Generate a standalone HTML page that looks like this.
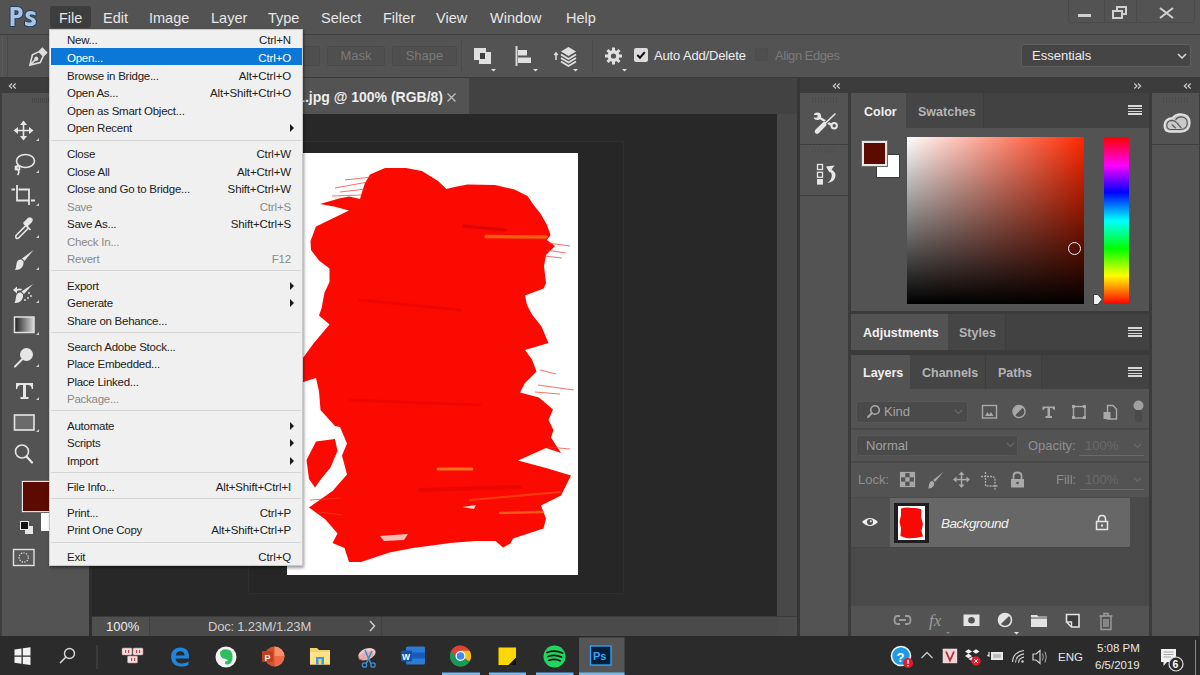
<!DOCTYPE html>
<html><head><meta charset="utf-8">
<style>
*{margin:0;padding:0;box-sizing:border-box}
html,body{width:1200px;height:675px;overflow:hidden;background:#535353;font-family:"Liberation Sans",sans-serif;position:relative}
.a{position:absolute}
.t{position:absolute;white-space:nowrap;line-height:1}
/* menubar */
#menubar{left:0;top:0;width:1200px;height:35px;background:#535353;border-bottom:1px solid #3d3d3d}
.mi{position:absolute;top:11px;font-size:14.5px;color:#e6e6e6;white-space:nowrap;line-height:1}
#opts{left:0;top:35px;width:1200px;height:43px;background:#535353;border-bottom:1px solid #3a3a3a}
.btn{position:absolute;top:46px;height:20px;border:1px solid #494949;background:#4f4f4f;border-radius:2px;color:#7a7a7a;font-size:13px;text-align:center;line-height:18px}
.hdr{background:#3c3c3c;height:15px}
.chev{color:#cfcfcf;font-size:10px;position:absolute;line-height:1}
/* menu */
#menu{left:49px;top:29px;width:254px;height:537px;background:#f0f0f0;border:1px solid #c8c8c8;box-shadow:1px 2px 3px rgba(0,0,0,.4)}
.m{position:absolute;left:17px;font-size:11.5px;color:#222;line-height:14px;white-space:nowrap;letter-spacing:-0.25px}
.k{position:absolute;right:11px;font-size:11.5px;color:#222;line-height:14px;white-space:nowrap;letter-spacing:-0.15px}
.dis{color:#8a8a8a}
.sep{position:absolute;left:1px;right:1px;height:1px;background:#d5d5d5}
.arr{position:absolute;right:8px;width:0;height:0;border-left:4px solid #1a1a1a;border-top:4px solid transparent;border-bottom:4px solid transparent}
</style></head>
<body>
<!-- menubar -->
<div id="menubar" class="a">
  <svg class="a" style="left:0;top:0" width="50" height="34" viewBox="0 0 50 34">
   <g stroke="#1d3552" stroke-width="1.6" stroke-linejoin="round" fill="#a8c3e3" paint-order="stroke">
    <path d="M10.5 7 H16.5 Q22.7 7 22.7 12.5 Q22.7 18.2 16.5 18.2 H14.5 V26 H10.5 Z M14.5 10.3 V14.9 H16 Q18.6 14.9 18.6 12.6 Q18.6 10.3 16 10.3 Z" fill-rule="evenodd"/>
    <path d="M35.5 12.2 Q33 11 30.5 11 Q25.5 11 25.5 15.3 Q25.5 18 29.3 19.2 Q31.8 20 31.8 21.2 Q31.8 22.6 29.5 22.6 Q27 22.6 25 21.2 V25 Q27 26.3 30 26.3 Q36 26.3 36 21.6 Q36 18.6 32 17.3 Q29.6 16.5 29.6 15.4 Q29.6 14.4 31.2 14.4 Q33.3 14.4 35.5 15.8 Z"/>
   </g>
  </svg>
  <div class="a" style="left:50px;top:6px;width:41px;height:22px;background:#3d3d3d;border-radius:3px"></div>
  <div class="mi" style="left:59px">File</div>
  <div class="mi" style="left:103px">Edit</div>
  <div class="mi" style="left:149px">Image</div>
  <div class="mi" style="left:211px">Layer</div>
  <div class="mi" style="left:268px">Type</div>
  <div class="mi" style="left:321px">Select</div>
  <div class="mi" style="left:383px">Filter</div>
  <div class="mi" style="left:436px">View</div>
  <div class="mi" style="left:490px">Window</div>
  <div class="mi" style="left:566px">Help</div>
  <!-- window controls -->
  <div class="a" style="left:1068px;top:-2px;width:127px;height:25px;border:1px solid #4a4a4a;border-radius:3px"></div>
  <div class="a" style="left:1104px;top:0;width:1px;height:22px;background:#4a4a4a"></div>
  <div class="a" style="left:1136px;top:0;width:1px;height:22px;background:#4a4a4a"></div>
  <div class="a" style="left:1078px;top:14px;width:13px;height:3px;background:#d0d0d0"></div>
  <div class="a" style="left:1116px;top:6px;width:11px;height:9px;border:2px solid #d0d0d0"></div>
  <div class="a" style="left:1112px;top:10px;width:11px;height:9px;border:2px solid #d0d0d0;background:#535353"></div>
  <svg class="a" style="left:1159px;top:7px" width="15" height="12"><path d="M1 1 L14 11 M14 1 L1 11" stroke="#d0d0d0" stroke-width="2"/></svg>
</div>

<!-- options bar -->
<div id="opts" class="a"></div>
  <div class="a" style="left:2px;top:36px;width:6px;height:41px;border-left:1px solid #5c5c5c;border-right:1px solid #4a4a4a"></div>
  <svg class="a" style="left:26px;top:47px;position:absolute" width="22" height="22" viewBox="0 0 22 22">
    <g transform="rotate(45 11 11)" fill="none" stroke="#dedede" stroke-width="1.6">
      <rect x="8" y="0.5" width="6" height="3.5" fill="#dedede"/>
      <path d="M8 5 L14 5 L16.5 12 L11 21 L5.5 12 Z"/>
      <circle cx="11" cy="12" r="1.3" fill="#dedede"/>
      <path d="M11 13 L11 20"/>
    </g>
  </svg>
  <div class="btn" style="left:303px;width:17px"></div>
  <div class="btn" style="left:327px;width:58px">Mask</div>
  <div class="btn" style="left:392px;width:65px">Shape</div>
  <div class="a" style="left:461px;top:40px;width:1px;height:33px;background:#4a4a4a"></div>
  <svg class="a" style="left:472px;top:46px" width="26" height="28" viewBox="0 0 26 28">
    <rect x="2" y="2" width="12" height="12" fill="#e0e0e0"/>
    <rect x="7" y="6" width="12" height="12" fill="#e0e0e0"/>
    <rect x="8" y="7" width="5" height="6" fill="#3e3e3e"/>
    <path d="M19 23 h5 l-2.5 2.5z" fill="#e0e0e0"/>
  </svg>
  <svg class="a" style="left:513px;top:45px" width="26" height="28" viewBox="0 0 26 28">
    <rect x="2.5" y="1" width="2" height="20" fill="#d8d8d8"/>
    <rect x="5" y="5" width="9" height="5.5" fill="#e0e0e0"/>
    <rect x="5" y="12.5" width="13" height="5.5" fill="#e0e0e0"/>
    <path d="M20 24 h5 l-2.5 2.5z" fill="#e0e0e0"/>
  </svg>
  <svg class="a" style="left:553px;top:45px" width="28" height="28" viewBox="0 0 28 28">
    <path d="M3 8 L3 15 M1.3 10 L3 8 L4.7 10" stroke="#e0e0e0" stroke-width="1.5" fill="none"/>
    <path d="M8 13 L15.5 17.5 L23 13 M8 16.5 L15.5 21 L23 16.5" stroke="#e0e0e0" stroke-width="1.8" fill="none"/>
    <path d="M15.5 2 L23 6.5 L15.5 11 L8 6.5 Z" fill="#e0e0e0"/>
    <path d="M8 9.5 L15.5 14 L23 9.5" stroke="#e0e0e0" stroke-width="1.8" fill="none"/>
    <path d="M20 24 h5 l-2.5 2.5z" fill="#e0e0e0"/>
  </svg>
  <div class="a" style="left:592px;top:40px;width:1px;height:33px;background:#4a4a4a"></div>
  <svg class="a" style="left:603px;top:46px" width="28" height="28" viewBox="0 0 28 28">
    <g fill="#e0e0e0">
      <circle cx="10.5" cy="10" r="6"/>
      <rect x="9" y="1.5" width="3" height="17"/>
      <rect x="2" y="8.5" width="17" height="3"/>
      <rect x="9" y="1.5" width="3" height="17" transform="rotate(45 10.5 10)"/>
      <rect x="9" y="1.5" width="3" height="17" transform="rotate(-45 10.5 10)"/>
    </g>
    <circle cx="10.5" cy="10" r="2.6" fill="#535353"/>
    <path d="M19 23 h5 l-2.5 2.5z" fill="#e0e0e0"/>
  </svg>
  <div class="a" style="left:634px;top:48px;width:13.5px;height:13.5px;background:#dcdcdc;border-radius:2px"></div>
  <svg class="a" style="left:634px;top:48px" width="14" height="14"><path d="M3.3 7 L6 9.7 L10.8 4.2" stroke="#111" stroke-width="2" fill="none"/></svg>
  <div class="t" style="left:654px;top:49px;font-size:13px;color:#ececec;letter-spacing:-0.15px">Auto Add/Delete</div>
  <div class="a" style="left:755px;top:48px;width:13px;height:13px;border:1px solid #4c4c4c;background:#4f4f4f;border-radius:2px"></div>
  <div class="t" style="left:775px;top:49px;font-size:13px;color:#7a7a7a;letter-spacing:-0.45px">Align Edges</div>
  <div class="a" style="left:1021px;top:44px;width:170px;height:23px;background:#454545;border:1px solid #5f5f5f;border-radius:3px"></div>
  <div class="t" style="left:1032px;top:49px;font-size:13px;color:#ececec">Essentials</div>
  <svg class="a" style="left:1177px;top:53px" width="10" height="7"><path d="M1 1 L5 5 L9 1" stroke="#dcdcdc" stroke-width="1.5" fill="none"/></svg>


<!-- left header strip -->
<div class="a hdr" style="left:0;top:78px;width:90px"></div>
<!-- left toolbar -->
<div class="a" style="left:0;top:93px;width:2px;height:543px;background:#3e3e3e"></div>
<div class="a" style="left:89px;top:78px;width:3px;height:558px;background:#2e2e2e"></div>

<!-- toolbar icons -->
<div class="a" style="left:32px;top:98px;width:17px;height:5px;background:repeating-linear-gradient(90deg,#474747 0 1px,#535353 1px 2px)"></div>
<svg class="a" style="left:0;top:110px" width="49" height="470" viewBox="0 110 49 470">
 <g fill="#e6e6e6">
  <path d="M36 141 h3 v-3 z M36 173 h3 v-3 z M36 206 h3 v-3 z M36 238 h3 v-3 z M36 270 h3 v-3 z M36 303 h3 v-3 z M36 335 h3 v-3 z M36 367 h3 v-3 z M36 400 h3 v-3 z M36 432 h3 v-3 z" fill="#cfcfcf"/>
 </g>
 <!-- move -->
 <g stroke="#e6e6e6" stroke-width="1.6" fill="#e6e6e6">
  <path d="M23.5 123 V138 M16 130.5 H31" fill="none"/>
  <path d="M23.5 120.5 L20 125 H27 Z M23.5 140.5 L20 136 H27 Z M13.5 130.5 L18 127 V134 Z M33.5 130.5 L29 127 V134 Z" stroke="none"/>
 </g>
 <!-- lasso -->
 <g stroke="#e6e6e6" stroke-width="1.6" fill="none">
  <ellipse cx="25.5" cy="161" rx="9" ry="6.5"/>
  <path d="M18 165 Q15 168 18 170 Q20 172 17.5 175"/>
  <rect x="15.5" y="166.5" width="4" height="3" />
 </g>
 <!-- crop -->
 <g stroke="#e6e6e6" stroke-width="1.8" fill="none">
  <path d="M17 185 V200.5 H29 M18.5 189.5 H29 V205 M11.5 189.5 H15 M31 200.5 H35"/>
 </g>
 <!-- eyedropper -->
 <g stroke="#e6e6e6" stroke-width="1.6" fill="none">
  <path d="M16 235.5 L26 225.5 L28.5 228 L18.5 238 Q15 239.5 16 235.5 Z"/>
  <path d="M24 223.5 L30.5 230 M27 226 L31 222 Q33 219 31 218.5 Q29 217 27 220 L23.5 223.5" fill="#e6e6e6"/>
 </g>
 <!-- brush -->
 <g fill="#e6e6e6">
  <path d="M33.5 250 L24.5 261 L22 258.5 Z"/>
  <path d="M21.5 259.5 Q17 259 16.5 264 Q16 268 15 270 Q20.5 270 22.5 266.5 Q24 263.5 23.5 261.5 Z"/>
 </g>
 <!-- healing -->
 <g fill="#e6e6e6">
  <path d="M33 284 L24 294 L21.5 291.5 Z"/>
  <path d="M21 292.5 Q16.5 292 16 297 Q15.5 301 14.5 303 Q20 303 22 299.5 Q23.5 296.5 23 294.5 Z"/>
  <path d="M13 290 L17 286.5 L17 289 Q20 288 22 289 L21 290.5 Q19 290 17 291 L17 293.5 Z"/>
  <circle cx="29" cy="293" r="0.9"/><circle cx="31" cy="296" r="0.9"/><circle cx="28" cy="298" r="0.9"/><circle cx="25" cy="300" r="0.9"/>
 </g>
 <!-- gradient -->
 <defs><linearGradient id="gr" x1="0" x2="1"><stop offset="0" stop-color="#1e1e1e"/><stop offset="1" stop-color="#d8d8d8"/></linearGradient></defs>
 <rect x="14.5" y="317" width="19.5" height="15.5" fill="url(#gr)" stroke="#e0e0e0" stroke-width="1.5"/>
 <!-- dodge -->
 <circle cx="26.5" cy="354.5" r="6.5" fill="#e6e6e6"/>
 <path d="M22 359.5 L15 366.5" stroke="#e6e6e6" stroke-width="2" stroke-linecap="round"/>
 <!-- type -->
 <path d="M16 383 H33 V389 H31.8 Q31.5 385 28 385 H26 V397 H28.5 V399 H20.5 V397 H23 V385 H21 Q17.5 385 17.2 389 H16 Z" fill="#e6e6e6"/>
 <!-- rect -->
 <rect x="14.5" y="415" width="19.5" height="15" fill="#6b6b6b" stroke="#e6e6e6" stroke-width="1.6"/>
 <!-- zoom -->
 <circle cx="22" cy="451.5" r="6.5" fill="none" stroke="#e6e6e6" stroke-width="1.6"/>
 <path d="M26.5 456.5 L32 462.5" stroke="#e6e6e6" stroke-width="2.2" stroke-linecap="round"/>
 <!-- default colors -->
 <rect x="25" y="526" width="8" height="8" fill="#e6e6e6"/>
 <rect x="20.5" y="521.5" width="8" height="8" fill="#111" stroke="#e6e6e6" stroke-width="1"/>
 <!-- quick mask -->
 <rect x="13.5" y="549.5" width="20.5" height="16" fill="#5a5a5a" stroke="#e0e0e0" stroke-width="1.4"/>
 <circle cx="23.7" cy="557.5" r="4.6" fill="none" stroke="#e0e0e0" stroke-width="1.2" stroke-dasharray="1.3 1.3"/>
</svg>
<!-- fg/bg -->
<div class="a" style="left:41px;top:497px;width:30px;height:34px;background:#fff"></div>
<div class="a" style="left:22px;top:481px;width:30px;height:31px;background:#5c0b02;border:1px solid #e8e8e8;outline:1px solid #6a6a6a"></div>
<svg class="a" style="left:8px;top:82px" width="9" height="8"><path d="M4 1.5 L1.3 4 L4 6.5 M7.7 1.5 L5 4 L7.7 6.5" stroke="#d0d0d0" stroke-width="1.1" fill="none"/></svg>

<!-- tab bar -->
<div class="a" style="left:92px;top:78px;width:708px;height:36px;background:#424242"></div>
<div class="a" style="left:92px;top:78px;width:377px;height:36px;background:#535353"></div>
<div class="t" style="left:180px;top:90px;font-size:14px;font-weight:bold;color:#ededed;width:263px;text-align:right">Untitled-1.jpg @ 100% (RGB/8)</div>
<svg class="a" style="left:446px;top:92px" width="11" height="11"><path d="M1.5 1.5 L9.5 9.5 M9.5 1.5 L1.5 9.5" stroke="#bdbdbd" stroke-width="1.3"/></svg>
<!-- canvas -->
<!-- canvas details -->
<div class="a" style="left:92px;top:114px;width:685px;height:502px;background:#282828"></div>
<div class="a" style="left:248px;top:141px;width:376px;height:453px;border:1px solid #2f2f2f;background:#262626"></div>
<div class="a" style="left:287px;top:153px;width:291px;height:422px;background:#fff;overflow:hidden">
<svg width="291" height="422" viewBox="287 153 291 422" style="position:absolute;left:0;top:0">
 <path fill="#fb0a02" d="M320 204 L339 198.5 L349 196.5 L360 199 L362 192 L365 183 L370 174.5 L385 168 L406 168 L422 171 L438 181 L446.5 189 L454.5 187 L467.5 184.5 L495 185 L514.5 189.5 L527.5 196 L534 205.5 L540.5 213.5 L547 225 L550.5 235 L547 240 L555 246 L546 255 L544 266 L546 283.5 L543.5 288.5 L525 295.5 L527 305 L532 314.5 L541.5 326.5 L548.5 343 L525 350 L532 359.5 L536.5 371.5 L525 383 L520 392.5 L539 397.5 L553 409.5 L548.5 420 L553.5 430 L551 437.5 L561 453 L546 448 L518 460.5 L546 468 L571 475.5 L566 485.5 L561 495.5 L541 505.5 L546 518.5 L543.5 528.5 L513 538.5 L510.5 543.5 L503 547.5 L495.5 541 L475.5 541 L450 543 L432 545.5 L413 548 L389.5 552.5 L361 562 L349 562 L344.5 548 L332.5 543 L337.5 533.5 L325.5 519.5 L309 507.5 L332.5 491 L347 474.5 L342 455.5 L347 443.5 L340 427 L335 426 L320.5 410 L319 391.5 L316 378 L300 383 L300 362 L313.5 343.5 L329.5 324.5 L319 315.5 L321.5 308.5 L324.5 292.5 L329.5 282 L329.5 268.5 L319 260.5 L311 250 L310.5 241 L316 226.5 L332.5 218.5 L349 210.5 L334 206.5 Z"/>
 <path fill="#fb0a02" d="M306.5 460 L316 441.5 L335 439 L337.5 451 L330.5 467.5 L321 479 L315 487.5 L309 479 Z"/>
 <g stroke="#f53a2a" stroke-width="1.2" opacity="0.7" fill="none">
  <path d="M335 188 L368 182 M340 192 L366 189 M332 196 L362 195 M345 180 L372 177"/>
  <path d="M548 243 L570 246 M546 250 L566 253 M544 256 L562 258 M548 447 L570 449 M310 500 L340 498 M318 512 L342 515 M540 370 L556 374 M538 385 L574 390 M535 392 L560 394"/>
 </g>
 <g fill="none" stroke-linecap="round">
  <path d="M486 236.5 L546 237" stroke="#f07a10" stroke-width="3.5" opacity="0.75"/>
  <path d="M464 226 L505 230" stroke="#c00000" stroke-width="3" opacity="0.5"/>
  <path d="M438 469 L472 469" stroke="#f2a020" stroke-width="3" opacity="0.7"/>
  <path d="M500 513 L543 512" stroke="#f09020" stroke-width="2.5" opacity="0.6"/>
  <path d="M420 490 L520 487" stroke="#d00000" stroke-width="4" opacity="0.35"/>
  <path d="M360 300 L460 310 M350 400 L480 405" stroke="#d80000" stroke-width="3" opacity="0.3"/>
  <path d="M470 500 L560 492" stroke="#ff6a10" stroke-width="2" opacity="0.5"/>
 </g>
 <path d="M380 536 L408 534 L404 540 L384 541 Z" fill="#f6d0c8" opacity="0.9"/>
 <path d="M462 507 L476 505 L474 509 Z" fill="#f8d8c8"/>
</svg>
</div>

<div class="a" style="left:777px;top:114px;width:20px;height:502px;background:#484848"></div>
<div class="a" style="left:797px;top:78px;width:3px;height:558px;background:#353535"></div>

<!-- right panels -->
<div class="a hdr" style="left:800px;top:78px;width:400px"></div>
<div class="a" style="left:800px;top:93px;width:400px;height:543px;background:#535353"></div>
<div class="a" style="left:848px;top:93px;width:3px;height:543px;background:#3b3b3b"></div>
<div class="a" style="left:1149px;top:93px;width:3px;height:543px;background:#3b3b3b"></div>
<div class="a" style="left:1199px;top:93px;width:1px;height:543px;background:#3b3b3b"></div>
<svg class="a" style="left:832px;top:82px" width="9" height="8"><path d="M4 1.5 L1.3 4 L4 6.5 M7.7 1.5 L5 4 L7.7 6.5" stroke="#d0d0d0" stroke-width="1.1" fill="none"/></svg>
<svg class="a" style="left:1133px;top:82px" width="9" height="8"><path d="M1.3 1.5 L4 4 L1.3 6.5 M5 1.5 L7.7 4 L5 6.5" stroke="#d0d0d0" stroke-width="1.1" fill="none"/></svg>
<svg class="a" style="left:1183px;top:82px" width="9" height="8"><path d="M4 1.5 L1.3 4 L4 6.5 M7.7 1.5 L5 4 L7.7 6.5" stroke="#d0d0d0" stroke-width="1.1" fill="none"/></svg>
<!-- icon column -->
<div class="a" style="left:800px;top:144px;width:48px;height:1px;background:#3e3e3e"></div>
<div class="a" style="left:800px;top:195px;width:48px;height:1px;background:#3e3e3e"></div>
<div class="a" style="left:812px;top:97px;width:25px;height:6px;background:repeating-linear-gradient(90deg,#4b4b4b 0 1px,#535353 1px 3px)"></div>
<div class="a" style="left:812px;top:149px;width:25px;height:4px;background:repeating-linear-gradient(90deg,#4d4d4d 0 1px,#535353 1px 3px)"></div>
<div class="a" style="left:1163px;top:97px;width:25px;height:6px;background:repeating-linear-gradient(90deg,#4b4b4b 0 1px,#535353 1px 3px)"></div>
<div class="a" style="left:1152px;top:144px;width:47px;height:1px;background:#3e3e3e"></div>
<svg class="a" style="left:805px;top:105px" width="40" height="35" viewBox="805 105 40 35">
 <path d="M820 118 L831.5 125" stroke="#e6e6e6" stroke-width="2.2" stroke-linecap="round"/>
 <circle cx="817.3" cy="116.3" r="3.8" fill="#e6e6e6"/>
 <path d="M812.5 115 H817.5 V117.6 H812.5 Z" fill="#535353"/>
 <circle cx="834.2" cy="125.8" r="2.7" fill="#535353" stroke="#e6e6e6" stroke-width="2"/>
 <path d="M835 114 L825 123.5" stroke="#535353" stroke-width="3.6" stroke-linecap="round"/>
 <path d="M835 114 L825 123.5" stroke="#e6e6e6" stroke-width="1.7" stroke-linecap="round"/>
 <path d="M824.2 124.3 L817 131.5" stroke="#e6e6e6" stroke-width="4.6" stroke-linecap="round"/>
</svg>
<svg class="a" style="left:808px;top:155px" width="40" height="40" viewBox="808 155 40 40">
 <rect x="817.5" y="164.5" width="5" height="5" fill="none" stroke="#e6e6e6" stroke-width="1.3"/>
 <rect x="817.5" y="172.3" width="5" height="5" fill="none" stroke="#e6e6e6" stroke-width="1.3"/>
 <rect x="817" y="179" width="6" height="5.6" fill="#e6e6e6"/>
 <path d="M826 166.5 L834.5 165.5 L829.5 172.5 Z" fill="#e6e6e6"/>
 <path d="M830 168.5 Q836.8 172 835.2 177.5 Q833.5 182 827.5 183 Q831.8 179.5 831.8 175.5 Q831.8 172.5 828.5 170.8 Z" fill="#e6e6e6"/>
</svg>
<svg class="a" style="left:1158px;top:105px" width="38" height="35" viewBox="1158 105 38 35">
 <path d="M1169.5 131.8 Q1164.3 131.5 1164.3 125.5 Q1164.5 118.5 1172.5 117.8 Q1175.5 114.2 1180.5 114.2 Q1189.8 114.5 1189.8 123 Q1189.5 131.8 1180.5 131.8 Z" fill="#c9c9c9" stroke="#e2e2e2" stroke-width="1.7"/>
 <path d="M1170 129.5 Q1166.8 129 1166.8 125.3 Q1167 120.5 1172 120.3 Q1175 120.3 1177.5 123.5 L1179.5 125.8 Q1181.5 128.3 1181.5 128.3" fill="none" stroke="#5a5a5a" stroke-width="1.2"/>
 <path d="M1175.5 119.8 Q1177.5 116.8 1181 116.8 Q1187.3 117.2 1187.3 123 Q1187.2 129.3 1180.5 129.5 H1170" fill="none" stroke="#5a5a5a" stroke-width="1.2"/>
 <path d="M1171.8 124.5 L1175.8 128.3" stroke="#5a5a5a" stroke-width="1.3"/>
</svg>
<!-- color panel -->
<div class="a" style="left:851px;top:93px;width:298px;height:35px;background:#424242"></div>
<div class="a" style="left:851px;top:93px;width:55px;height:35px;background:#535353"></div>
<div class="a" style="left:906px;top:93px;width:78px;height:35px;background:#454545;border-right:1px solid #3c3c3c"></div>
<div class="t" style="left:864px;top:106px;font-size:12.5px;font-weight:bold;color:#f0f0f0">Color</div>
<div class="t" style="left:918px;top:106px;font-size:12.5px;font-weight:bold;color:#b4b4b4">Swatches</div>
<div class="a" style="left:1128px;top:105px;width:14px;height:10px;background:repeating-linear-gradient(180deg,#d8d8d8 0 1.5px,transparent 1.5px 2.75px)"></div>
<div class="a" style="left:876px;top:154px;width:24px;height:24px;background:#fff;border:1px solid #3a3a3a"></div>
<div class="a" style="left:861px;top:140px;width:27px;height:27px;background:#e8e8e8;border:1px solid #6a6a6a;padding:2px"><div style="width:100%;height:100%;background:#5c0b02"></div></div>
<div class="a" style="left:907px;top:137px;width:177px;height:167px;background:linear-gradient(to bottom,rgba(0,0,0,0),#000),linear-gradient(to right,#fff,#ff2800)"></div>
<div class="a" style="left:1068px;top:242px;width:13px;height:13px;border:1.5px solid #f0f0f0;border-radius:50%"></div>
<div class="a" style="left:1104px;top:137px;width:25px;height:167px;background:linear-gradient(to bottom,#ff0000 0%,#ff00ff 17%,#0000ff 33%,#00ffff 50%,#00ff00 67%,#ffff00 83%,#ff0000 100%)"></div>
<svg class="a" style="left:1092px;top:293px" width="11" height="13"><path d="M1.5 1.5 H6 L10 6.5 L6 11.5 H1.5 Z" fill="#f0f0f0" stroke="#3a3a3a" stroke-width="1"/></svg>
<div class="a" style="left:851px;top:311px;width:298px;height:3px;background:#3b3b3b"></div>
<!-- adjustments -->
<div class="a" style="left:851px;top:314px;width:298px;height:36px;background:#424242"></div>
<div class="a" style="left:851px;top:314px;width:97px;height:36px;background:#535353"></div>
<div class="a" style="left:948px;top:314px;width:58px;height:36px;background:#454545;border-right:1px solid #3c3c3c"></div>
<div class="t" style="left:863px;top:327px;font-size:12.5px;font-weight:bold;color:#f0f0f0">Adjustments</div>
<div class="t" style="left:959px;top:327px;font-size:12.5px;font-weight:bold;color:#b4b4b4">Styles</div>
<div class="a" style="left:1128px;top:327px;width:14px;height:10px;background:repeating-linear-gradient(180deg,#d8d8d8 0 1.5px,transparent 1.5px 2.75px)"></div>
<div class="a" style="left:851px;top:350px;width:298px;height:5px;background:#3b3b3b"></div>
<!-- layers -->
<div class="a" style="left:851px;top:355px;width:298px;height:34px;background:#424242"></div>
<div class="a" style="left:851px;top:355px;width:59px;height:34px;background:#535353"></div>
<div class="a" style="left:910px;top:355px;width:76px;height:34px;background:#454545;border-right:1px solid #3c3c3c"></div>
<div class="a" style="left:986px;top:355px;width:56px;height:34px;background:#454545;border-right:1px solid #3c3c3c"></div>
<div class="t" style="left:863px;top:367px;font-size:12.5px;font-weight:bold;color:#f0f0f0">Layers</div>
<div class="t" style="left:922px;top:367px;font-size:12.5px;font-weight:bold;color:#b4b4b4">Channels</div>
<div class="t" style="left:998px;top:367px;font-size:12.5px;font-weight:bold;color:#b4b4b4">Paths</div>
<div class="a" style="left:1128px;top:367px;width:14px;height:10px;background:repeating-linear-gradient(180deg,#d8d8d8 0 1.5px,transparent 1.5px 2.75px)"></div>



<!-- layers body -->
<div class="a" style="left:851px;top:427.5px;width:298px;height:2px;background:#484848"></div>
<div class="a" style="left:851px;top:461px;width:298px;height:2px;background:#484848"></div>
<div class="a" style="left:856px;top:400.5px;width:112px;height:22px;background:#4a4a4a;border:1px solid #575757;border-radius:3px"></div>
<svg class="a" style="left:865px;top:403px" width="17" height="17" viewBox="0 0 17 17"><circle cx="10" cy="7" r="4.3" fill="none" stroke="#a8a8a8" stroke-width="1.6"/><path d="M7 10 L3 14" stroke="#a8a8a8" stroke-width="2" stroke-linecap="round"/></svg>
<div class="t" style="left:884px;top:405px;font-size:13px;color:#a5a5a5">Kind</div>
<svg class="a" style="left:954px;top:409px" width="9" height="6"><path d="M1 1 L4.5 4.5 L8 1" stroke="#6a6a6a" stroke-width="1.2" fill="none"/></svg>
<svg class="a" style="left:978px;top:398px" width="175" height="28" viewBox="978 398 175 28">
 <g stroke="#a9a9a9" fill="none" stroke-width="1.4">
  <rect x="982.5" y="405.5" width="14" height="12.5"/>
  <circle cx="1019" cy="411.5" r="6"/>
  <rect x="1073.5" y="406.5" width="11.5" height="11.5"/>
 </g>
 <path d="M985 416 L987.5 412 L990 416 Z M988.5 416 L991 412 L993.5 416 Z" fill="#a9a9a9"/>
 <path d="M1014.8 415.7 A6 6 0 0 1 1023.2 407.3 Z" fill="#a9a9a9"/>
 <path d="M1042.5 406.5 H1055 V410 H1054 Q1053.5 408 1051 408 H1050 V416 H1052 V418 H1045.5 V416 H1047.5 V408 H1046.5 Q1044 408 1043.5 410 H1042.5 Z" fill="#a9a9a9"/>
 <g fill="#a9a9a9"><rect x="1072" y="405" width="3" height="3"/><rect x="1083" y="405" width="3" height="3"/><rect x="1072" y="416" width="3" height="3"/><rect x="1083" y="416" width="3" height="3"/></g>
 <path d="M1107.5 405.5 H1113 L1116.5 409 V419 H1107.5 Z" fill="none" stroke="#a9a9a9" stroke-width="1.4"/>
 <rect x="1103.5" y="412" width="7" height="7" fill="#a9a9a9"/>
 <circle cx="1138.5" cy="405.5" r="5" fill="#a0a0a0"/>
 <rect x="1135" y="410" width="7" height="12" rx="3" fill="#4a4a4a"/>
</svg>
<div class="a" style="left:856px;top:434.5px;width:162px;height:21px;background:#4a4a4a;border:1px solid #575757;border-radius:3px"></div>
<div class="t" style="left:866px;top:439px;font-size:13px;color:#a0a0a0">Normal</div>
<svg class="a" style="left:1006px;top:442px" width="9" height="6"><path d="M1 1 L4.5 4.5 L8 1" stroke="#6a6a6a" stroke-width="1.2" fill="none"/></svg>
<div class="t" style="left:1028px;top:439px;font-size:13px;color:#8e8e8e">Opacity:</div>
<div class="t" style="left:1085px;top:439px;font-size:13px;color:#6a6a6a">100%</div>
<div class="a" style="left:1079px;top:455px;width:65px;height:1px;background:#6a6a6a"></div>
<svg class="a" style="left:1133px;top:443px" width="9" height="6"><path d="M1 1 L4.5 4.5 L8 1" stroke="#6a6a6a" stroke-width="1.2" fill="none"/></svg>
<div class="t" style="left:858px;top:473px;font-size:13px;color:#8e8e8e">Lock:</div>
<svg class="a" style="left:895px;top:468px" width="135" height="24" viewBox="895 468 135 24">
 <g fill="#a9a9a9">
  <rect x="900.5" y="472.5" width="14" height="14" fill="none" stroke="#a9a9a9" stroke-width="1.2"/>
  <rect x="901" y="473" width="4.3" height="4.3"/><rect x="909.6" y="473" width="4.3" height="4.3"/><rect x="905.3" y="477.3" width="4.3" height="4.3"/><rect x="901" y="481.6" width="4.3" height="4.3"/><rect x="909.6" y="481.6" width="4.3" height="4.3"/>
  <path d="M943.5 472 L935 482 L933 480 Z"/>
  <path d="M932.5 481 Q929.5 481 929 485 Q928.8 487 928 488.5 Q932 488.5 933.5 486 Q934.5 484 934 482.5 Z"/>
  <path d="M961.5 471.5 L958.5 475 H964.5 Z M961.5 488 L958.5 484.5 H964.5 Z M953 479.5 L956.5 476.5 V482.5 Z M970 479.5 L966.5 476.5 V482.5 Z"/>
  <rect x="960.8" y="474" width="1.5" height="11"/><rect x="956" y="478.8" width="11" height="1.5"/>
  <rect x="1011" y="479" width="13" height="8.5"/>
 </g>
 <path d="M985.5 472 V486 H998 M981 476.5 H993 L995 478.5 V490" fill="none" stroke="#a9a9a9" stroke-width="1.3" stroke-dasharray="2 1"/>
 <path d="M1013.5 479 V476 Q1013.5 472.5 1017.5 472.5 Q1021.5 472.5 1021.5 476 V479" fill="none" stroke="#a9a9a9" stroke-width="1.8"/>
 <circle cx="1017.5" cy="483" r="1.3" fill="#535353"/>
</svg>
<div class="t" style="left:1056px;top:473px;font-size:13px;color:#8e8e8e">Fill:</div>
<div class="t" style="left:1085px;top:473px;font-size:13px;color:#6a6a6a">100%</div>
<div class="a" style="left:1080px;top:489px;width:64px;height:1px;background:#6a6a6a"></div>
<svg class="a" style="left:1133px;top:477px" width="9" height="6"><path d="M1 1 L4.5 4.5 L8 1" stroke="#6a6a6a" stroke-width="1.2" fill="none"/></svg>
<!-- layer list -->
<div class="a" style="left:851px;top:497px;width:298px;height:109px;background:#4a4a4a"></div>
<div class="a" style="left:851px;top:498px;width:39px;height:49px;background:#505050"></div>
<div class="a" style="left:890px;top:498px;width:240px;height:49px;background:#676767"></div>
<div class="a" style="left:851px;top:547px;width:279px;height:1px;background:#454545"></div>
<svg class="a" style="left:860px;top:514px" width="20" height="16" viewBox="0 0 20 16"><path d="M2 8 Q10 0 18 8 Q10 16 2 8 Z" fill="#efefef"/><circle cx="10" cy="8" r="3" fill="#505050"/><circle cx="10.8" cy="7.2" r="1" fill="#efefef"/></svg>
<div class="a" style="left:893.5px;top:502.5px;width:35px;height:40px;background:#1e1e1e"></div>
<div class="a" style="left:898px;top:505.5px;width:27px;height:34px;background:#fff;overflow:hidden">
 <svg width="27" height="34" viewBox="0 0 27 34"><path d="M3 2.5 Q8 1 14 2 Q21 1.5 23.5 3.5 L23 11 L25 18 L23.5 25 L25 30.5 Q16 33 8 32 L2.5 30 L3 22 L1.5 16 L3 9 Z" fill="#f70a05"/></svg>
</div>
<div class="t" style="left:941px;top:517px;font-size:13.5px;font-style:italic;color:#f0f0f0;letter-spacing:-0.5px">Background</div>
<svg class="a" style="left:1094px;top:514px" width="16" height="17" viewBox="0 0 16 17">
 <path d="M4.5 7.5 V5 Q4.5 1.5 8 1.5 Q11.5 1.5 11.5 5 V7.5" fill="none" stroke="#e6e6e6" stroke-width="1.5"/>
 <rect x="2.5" y="7.5" width="11" height="8" fill="none" stroke="#e6e6e6" stroke-width="1.5"/>
 <rect x="7" y="10.5" width="2" height="2" fill="#e6e6e6"/>
</svg>
<!-- layers bottom bar -->
<div class="a" style="left:851px;top:606px;width:298px;height:30px;background:#535353"></div>
<svg class="a" style="left:890px;top:608px" width="230" height="28" viewBox="890 608 230 28">
 <g fill="none" stroke="#9c9c9c" stroke-width="1.8">
  <path d="M900 616 H897.5 Q894.5 616 894.5 620 Q894.5 624 897.5 624 H900 M905 616 H907.5 Q910.5 616 910.5 620 Q910.5 624 907.5 624 H905 M899 620 H906"/>
 </g>
 <text x="929" y="626" font-family="Liberation Serif" font-style="italic" font-size="17" fill="#9c9c9c">fx</text>
 <path d="M946 632 h4 l-2 2z" fill="#8a8a8a"/>
 <rect x="963.5" y="614.5" width="16" height="11.5" fill="#e3e3e3"/>
 <circle cx="971.5" cy="620.2" r="3.3" fill="#535353"/>
 <circle cx="1005" cy="620" r="6.5" fill="none" stroke="#e3e3e3" stroke-width="1.6"/>
 <path d="M1000.4 624.6 A6.5 6.5 0 0 1 1009.6 615.4 Z" fill="#e3e3e3"/>
 <path d="M1014 632 h5 l-2.5 2.5z" fill="#e3e3e3"/>
 <path d="M1031 615 H1037 L1038.5 616.5 H1047 V627 H1031 Z" fill="#e3e3e3"/>
 <path d="M1031 618 H1047" stroke="#535353" stroke-width="1"/>
 <path d="M1066.5 614.5 H1079 V627 H1071.5 L1066.5 622 Z" fill="#3c3c3c" stroke="#e3e3e3" stroke-width="1.6"/>
 <path d="M1066.5 622 H1071.5 V627" fill="none" stroke="#e3e3e3" stroke-width="1.4"/>
 <g fill="none" stroke="#9c9c9c" stroke-width="1.4">
  <path d="M1099.5 616 H1112.5 M1104 616 V613.5 H1108 V616 M1101 616 V629.5 H1111 V616 M1104 619 V627 M1106 619 V627 M1108 619 V627"/>
 </g>
</svg>

<!-- status bar -->
<div class="a" style="left:92px;top:616px;width:705px;height:20px;background:#4a4a4a;border-top:1px solid #3a3a3a"></div>
<div class="a" style="left:92px;top:617px;width:58px;height:19px;background:#4f4f4f;border-right:1px solid #404040"></div>
<div class="a" style="left:381px;top:617px;width:1px;height:19px;background:#404040"></div>
<div class="a" style="left:777px;top:617px;width:20px;height:19px;background:#4c4c4c"></div>
<div class="t" style="left:106px;top:620px;font-size:13px;color:#ececec">100%</div>
<div class="t" style="left:208px;top:620px;font-size:13px;color:#cdcdcd;letter-spacing:-0.2px">Doc: 1.23M/1.23M</div>
<svg class="a" style="left:368px;top:619px" width="9" height="14"><path d="M2 2 L6.5 7 L2 12" stroke="#d0d0d0" stroke-width="1.4" fill="none"/></svg>
<!-- taskbar -->
<div class="a" style="left:0;top:636px;width:1200px;height:39px;background:#2b2b2b"></div>
<svg class="a" style="left:0;top:636px" width="1200" height="39" viewBox="0 636 1200 39">
 <!-- windows -->
 <g fill="#f2f2f2">
  <path d="M14.5 649.5 L21.5 648.5 V655.5 H14.5 Z M22.8 648.3 L30.5 647.2 V655.5 H22.8 Z M14.5 656.8 H21.5 V663.8 L14.5 662.8 Z M22.8 656.8 H30.5 V665 L22.8 664 Z"/>
 </g>
 <!-- search -->
 <circle cx="69.5" cy="653.5" r="5" fill="none" stroke="#d8d8d8" stroke-width="1.4"/>
 <path d="M66 657 L60 663" stroke="#d8d8d8" stroke-width="1.6"/>
 <path d="M97 645 V669" stroke="#4a4a4a" stroke-width="1"/>
 <!-- keyboard icon -->
 <g fill="#f4dede" stroke="#b08a8a" stroke-width="0.6">
  <rect x="122" y="648" width="10" height="7" rx="1"/><rect x="133" y="648" width="10" height="7" rx="1"/><rect x="127.5" y="656" width="10" height="7" rx="1"/>
 </g>
 <g fill="#c04a4a"><rect x="125" y="650" width="1.2" height="3"/><rect x="128" y="650" width="1.2" height="3"/><rect x="136" y="650" width="1.2" height="3"/><rect x="139" y="650" width="1.2" height="3"/><rect x="131" y="658" width="1.2" height="3"/><rect x="134" y="658" width="1.2" height="3"/></g>
 <!-- edge -->
 <path d="M189 658.5 H175.5 Q176 663 181 663.5 Q185 663.8 188.5 661.5 V665 Q184.5 667 180 666.5 Q171.5 665.5 171 657 Q171 648 180 647.5 Q189.5 647.5 189 658.5 Z M175.7 655.5 H184.7 Q184.3 651.2 180.2 651.2 Q176.2 651.2 175.7 655.5 Z" fill="#1d86e0" fill-rule="evenodd"/>
 <!-- evernote -->
 <circle cx="226" cy="657" r="10.5" fill="#f4f4f4"/>
 <path d="M220 652 L223 649.5 Q228 648.5 231 651 Q233.5 656 232 661 Q230 665 226.5 664.5 Q224.5 664 225 661.5 L228 661 Q227 658.5 223.5 658.5 Q220 657.5 220 652 Z" fill="#2dbe60"/>
 <!-- powerpoint -->
 <circle cx="274.5" cy="656.5" r="10" fill="#d35230"/>
 <path d="M274.5 646.5 A10 10 0 0 1 284.5 656.5 H274.5 Z" fill="#ff8f6b"/>
 <path d="M274.5 656.5 H284.5 A10 10 0 0 1 274.5 666.5 Z" fill="#ed6c47"/>
 <rect x="262" y="651" width="11" height="11" rx="1" fill="#c43e1c"/>
 <text x="264.5" y="660.5" font-family="Liberation Sans" font-weight="bold" font-size="9" fill="#fff">P</text>
 <!-- explorer -->
 <path d="M310 648 H317 L319 650 H330 V664.5 H310 Z" fill="#f5d36c"/>
 <path d="M310 652 H330 V664.5 H310 Z" fill="#ffe28a"/>
 <rect x="316" y="657" width="8" height="7.5" fill="#3f9bd8"/>
 <rect x="318.5" y="659" width="3" height="5.5" fill="#f5d36c"/>
 <!-- snipping -->
 <ellipse cx="367" cy="654" rx="9" ry="5.5" fill="#f2c8c8" transform="rotate(-20 367 654)"/>
 <ellipse cx="366" cy="656" rx="8" ry="4" fill="#d99" transform="rotate(-20 366 656)" opacity="0.6"/>
 <path d="M365 650 L371 664 M372 651 L366 664" stroke="#3f8fd0" stroke-width="1.6"/>
 <circle cx="364.5" cy="665" r="2.2" fill="none" stroke="#3f8fd0" stroke-width="1.3"/>
 <circle cx="373" cy="665" r="2.2" fill="none" stroke="#3f8fd0" stroke-width="1.3"/>
 <!-- word -->
 <rect x="406" y="646.5" width="19" height="18" rx="1.5" fill="#2b7cd3"/>
 <rect x="406" y="652.5" width="19" height="6" fill="#185abd"/>
 <rect x="401" y="650.5" width="11" height="11" rx="1" fill="#1a4fa8"/>
 <text x="402" y="659.5" font-family="Liberation Sans" font-weight="bold" font-size="8.5" fill="#fff">W</text>
 <!-- chrome -->
 <circle cx="460.5" cy="656" r="10.5" fill="#db4437"/>
 <path d="M460.5 656 L451.4 661.25 A10.5 10.5 0 0 0 460.5 666.5 Z M460.5 656 L460.5 666.5 A10.5 10.5 0 0 0 469.6 661.25 Z" fill="#0f9d58"/>
 <path d="M460.5 656 L469.6 661.25 A10.5 10.5 0 0 0 469.6 650.75 L460.5 650.75 Z" fill="#f4c20d"/>
 <path d="M451.4 661.25 A10.5 10.5 0 0 1 451.4 650.75 L460.5 656 Z" fill="#0f9d58"/>
 <path d="M460.5 645.5 A10.5 10.5 0 0 0 451.4 650.75 L456 658.5 Z" fill="#db4437"/>
 <circle cx="460.5" cy="656" r="5" fill="#fff"/>
 <circle cx="460.5" cy="656" r="3.8" fill="#4285f4"/>
 <!-- sticky -->
 <rect x="498.5" y="647.5" width="17.5" height="17.5" fill="#fcd703"/>
 <path d="M516 657.5 V665 H508.5 Z" fill="#111"/>
 <!-- spotify -->
 <circle cx="554.5" cy="656.5" r="11" fill="#1ed760"/>
 <path d="M547 652.5 Q555 649.5 562.5 653 M548 656.5 Q555 654 561.5 657 M549 660.3 Q554.5 658.3 560 660.8" stroke="#191414" stroke-width="1.8" fill="none" stroke-linecap="round"/>
 <!-- ps active -->
 <rect x="579" y="637.5" width="45.5" height="37.5" fill="#555"/>
 <rect x="590.5" y="646" width="20.5" height="19" fill="#001e36" stroke="#31a8ff" stroke-width="1.3"/>
 <text x="593" y="660" font-family="Liberation Sans" font-weight="bold" font-size="11" fill="#31a8ff">Ps</text>
 <!-- underlines -->
 <g fill="#76b9ed">
  <rect x="442" y="672.5" width="38" height="2.5"/><rect x="489" y="672.5" width="37" height="2.5"/><rect x="536" y="672.5" width="37.5" height="2.5"/><rect x="579" y="672.5" width="45.5" height="2.5"/>
 </g>
 <!-- tray -->
 <circle cx="901" cy="656" r="9.5" fill="#1e9be2" stroke="#f2f2f2" stroke-width="1.6"/>
 <text x="896.5" y="661.5" font-family="Liberation Sans" font-weight="bold" font-size="13" fill="#fff">?</text>
 <circle cx="908" cy="663" r="5" fill="#e01e2b"/>
 <rect x="907.3" y="659.8" width="1.4" height="4" fill="#fff"/><rect x="907.3" y="665" width="1.4" height="1.3" fill="#fff"/>
 <path d="M921.5 658 L927 652.5 L932.5 658" stroke="#c8c8c8" stroke-width="1.3" fill="none"/>
 <rect x="942.7" y="648.7" width="14.5" height="14.5" fill="#f2d6d6"/>
 <path d="M946 651.5 L950 660.5 L954 651.5" stroke="#a8303c" stroke-width="1.8" fill="none"/>
 <g fill="#f2f2f2">
  <path d="M965 651.5 L968.5 649.3 L972 651.5 L968.5 653.7 Z M972.5 651.5 L976 649.3 L979.5 651.5 L976 653.7 Z M965 656 L968.5 653.8 L972 656 L968.5 658.2 Z M968.5 659 L972 657 L975.5 659 L972 661 Z"/>
 </g>
 <circle cx="976" cy="661" r="4.7" fill="#e01e2b"/>
 <path d="M974.2 659.2 L977.8 662.8 M977.8 659.2 L974.2 662.8" stroke="#fff" stroke-width="1"/>
 <rect x="991.5" y="652.5" width="11" height="7" fill="#e8e8e8" stroke="#e8e8e8" stroke-width="1"/>
 <rect x="993" y="654" width="8" height="4" fill="#bdbdbd"/>
 <path d="M987.5 656 H990 M989 652 V654.5 L987.5 656" stroke="#e8e8e8" stroke-width="1.2" fill="none"/>
 <g fill="none" stroke="#d0d0d0" stroke-width="1.2">
  <path d="M1012.5 662 Q1013 652 1024 650.5 M1015.5 662.5 Q1016 655 1024 653.8 M1018.5 662.7 Q1019 658 1024 657.2"/>
 </g>
 <circle cx="1022.5" cy="661.5" r="1.2" fill="#d0d0d0"/>
 <path d="M1033 654 H1036 L1040 650.5 V663.5 L1036 660 H1033 Z" fill="none" stroke="#d0d0d0" stroke-width="1.2"/>
 <path d="M1042.5 653.5 Q1044 657 1042.5 660.5 M1045 651.5 Q1047.5 657 1045 662.5" fill="none" stroke="#a8a8a8" stroke-width="1"/>
 <text x="1058" y="661" font-family="Liberation Sans" font-size="11.5" fill="#e6e6e6">ENG</text>
 <text x="1097" y="652" font-family="Liberation Sans" font-size="11.5" fill="#e6e6e6">5:08 PM</text>
 <text x="1095" y="669" font-family="Liberation Sans" font-size="11.5" fill="#e6e6e6">6/5/2019</text>
 <path d="M1161 649 H1176 V662 H1167 L1163.5 666 V662 H1161 Z" fill="#f2f2f2"/>
 <path d="M1163.5 652 H1173.5 M1163.5 654.5 H1173.5 M1163.5 657 H1171" stroke="#9a9a9a" stroke-width="0.9"/>
 <circle cx="1176" cy="664" r="7" fill="#2b2b2b" stroke="#e0e0e0" stroke-width="1.2"/>
 <text x="1172.5" y="668" font-family="Liberation Sans" font-weight="bold" font-size="10.5" fill="#fff">6</text>
 <path d="M1195.5 640 V675" stroke="#8a8a8a" stroke-width="1"/>
</svg>

<!-- file menu -->
<div id="menu" class="a">
<div class="a" style="left:1px;top:18px;width:251px;height:17px;background:#0b78d7"></div>
<div class="m" style="top:3.0px">New...</div>
<div class="k" style="top:3.0px">Ctrl+N</div>
<div class="m" style="top:20.5px;color:#fff">Open...</div>
<div class="k" style="top:20.5px;color:#fff">Ctrl+O</div>
<div class="m" style="top:38.5px">Browse in Bridge...</div>
<div class="k" style="top:38.5px">Alt+Ctrl+O</div>
<div class="m" style="top:56.0px">Open As...</div>
<div class="k" style="top:56.0px">Alt+Shift+Ctrl+O</div>
<div class="m" style="top:73.5px">Open as Smart Object...</div>
<div class="m" style="top:91.0px">Open Recent</div>
<div class="arr" style="top:94.0px"></div>
<div class="sep" style="top:110px"></div>
<div class="m" style="top:117.0px">Close</div>
<div class="k" style="top:117.0px">Ctrl+W</div>
<div class="m" style="top:134.5px">Close All</div>
<div class="k" style="top:134.5px">Alt+Ctrl+W</div>
<div class="m" style="top:152.0px">Close and Go to Bridge...</div>
<div class="k" style="top:152.0px">Shift+Ctrl+W</div>
<div class="m dis" style="top:169.5px">Save</div>
<div class="k dis" style="top:169.5px">Ctrl+S</div>
<div class="m" style="top:187.0px">Save As...</div>
<div class="k" style="top:187.0px">Shift+Ctrl+S</div>
<div class="m dis" style="top:204.5px">Check In...</div>
<div class="m dis" style="top:222.0px">Revert</div>
<div class="k dis" style="top:222.0px">F12</div>
<div class="sep" style="top:240px"></div>
<div class="m" style="top:248.5px">Export</div>
<div class="arr" style="top:251.5px"></div>
<div class="m" style="top:266.0px">Generate</div>
<div class="arr" style="top:269.0px"></div>
<div class="m" style="top:283.5px">Share on Behance...</div>
<div class="sep" style="top:302px"></div>
<div class="m" style="top:309.5px">Search Adobe Stock...</div>
<div class="m" style="top:327.0px">Place Embedded...</div>
<div class="m" style="top:344.5px">Place Linked...</div>
<div class="m dis" style="top:362.0px">Package...</div>
<div class="sep" style="top:380px"></div>
<div class="m" style="top:388.5px">Automate</div>
<div class="arr" style="top:391.5px"></div>
<div class="m" style="top:406.0px">Scripts</div>
<div class="arr" style="top:409.0px"></div>
<div class="m" style="top:423.5px">Import</div>
<div class="arr" style="top:426.5px"></div>
<div class="sep" style="top:442px"></div>
<div class="m" style="top:450.0px">File Info...</div>
<div class="k" style="top:450.0px">Alt+Shift+Ctrl+I</div>
<div class="sep" style="top:468px"></div>
<div class="m" style="top:475.5px">Print...</div>
<div class="k" style="top:475.5px">Ctrl+P</div>
<div class="m" style="top:493.0px">Print One Copy</div>
<div class="k" style="top:493.0px">Alt+Shift+Ctrl+P</div>
<div class="sep" style="top:512px"></div>
<div class="m" style="top:519.5px">Exit</div>
<div class="k" style="top:519.5px">Ctrl+Q</div>

</div>
</body></html>
